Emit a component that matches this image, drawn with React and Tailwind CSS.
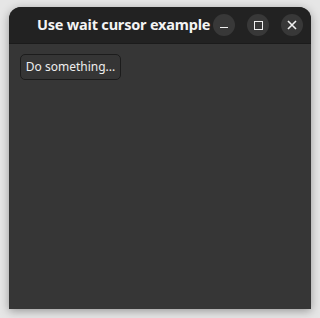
export default function App() {
  return (
    <div className="min-h-[318px] w-[320px] bg-[#e6e6e6] pl-[9px] pt-[7px]">
      <div className="flex h-[302px] w-[302px] flex-col overflow-hidden rounded-t-[12px] bg-[#363636] shadow-[0_2px_10px_rgba(0,0,0,0.35)]">
        <div className="flex h-[37px] items-center border-b border-[#1b1b1b] bg-[#222222] pl-[28px] pr-[8px]">
          <span
            className="shrink-0 whitespace-nowrap text-[14.5px] font-bold tracking-[-0.2px] text-[#f4f4f4]"
            style={{ fontFamily: '"Noto Sans", "Open Sans", sans-serif' }}
          >
            Use wait cursor example
          </span>
          <div className="ml-auto flex items-center gap-[12px]">
            <div className="flex h-[22px] w-[22px] items-center justify-center rounded-full bg-[#383838]">
              <div className="mt-[5px] h-[1.5px] w-[8px] bg-[#f0f0f0]" />
            </div>
            <div className="flex h-[22px] w-[22px] items-center justify-center rounded-full bg-[#383838]">
              <div className="h-[9px] w-[9px] border-[1.5px] border-[#f0f0f0]" />
            </div>
            <div className="flex h-[22px] w-[22px] items-center justify-center rounded-full bg-[#383838]">
              <svg width="10" height="10" viewBox="0 0 10 10">
                <path d="M1 1 L9 9 M9 1 L1 9" stroke="#f0f0f0" strokeWidth="1.6" />
              </svg>
            </div>
          </div>
        </div>
        <div className="px-[11px] pt-[10px]">
          <button
            type="button"
            className="flex h-[26px] w-[101px] items-center justify-center rounded-[5px] border border-[#1c1c1c] bg-[#353535] text-[12px] text-[#eeeeee]"
            style={{ fontFamily: '"Noto Sans", "Open Sans", sans-serif' }}
          >
            Do something...
          </button>
        </div>
      </div>
    </div>
  );
}
